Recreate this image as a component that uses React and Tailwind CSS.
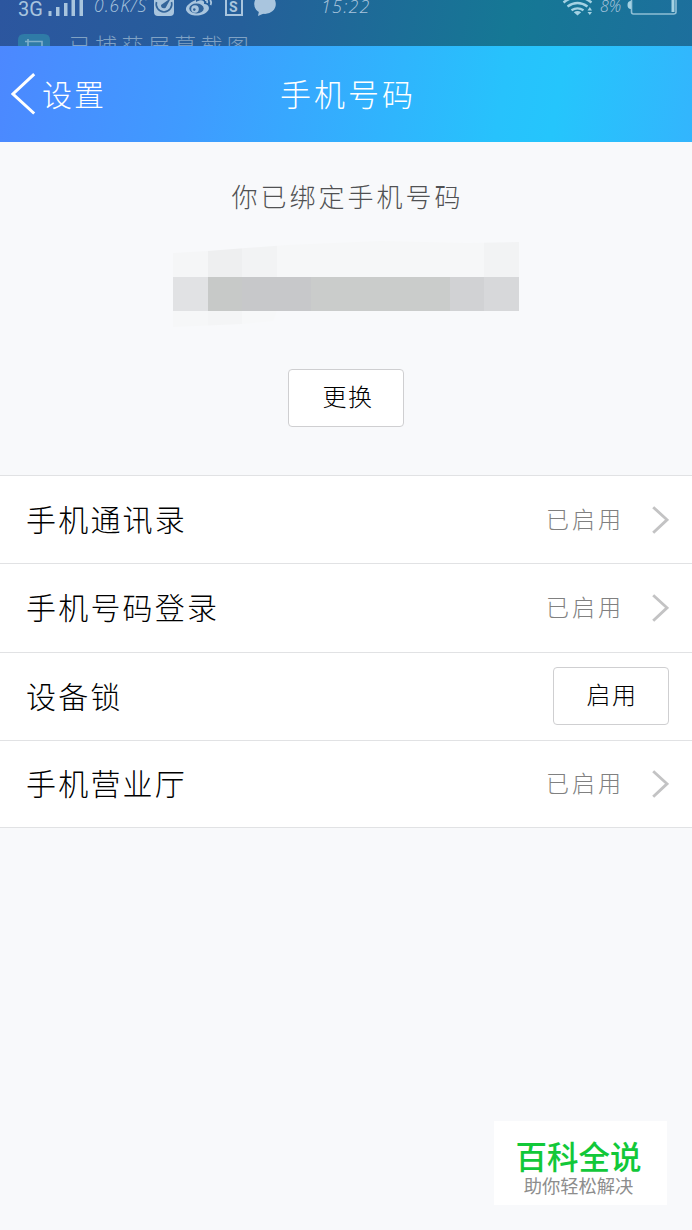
const CJK = "font-['Noto_Sans_CJK_SC',sans-serif]";

function Chevron() {
  return (
    <svg className="ml-[28px] h-[28px] w-[17px] shrink-0" viewBox="0 0 17 28" fill="none" stroke="#c3c3c4" strokeWidth="2.9">
      <path d="M1.2 1.2 L15 13.8 L1.2 26.8" />
    </svg>
  );
}

function Row({ label, action, height }) {
  return (
    <li className={"flex items-center border-b border-[#e1e2e4] bg-white pl-[26px] pr-[23px] " + height}>
      <span className="flex-1 pb-[4px] text-[30px] font-light leading-[40px] tracking-[2.2px] text-black">{label}</span>
      {action ? (
        <button className="mb-[2px] h-[58px] w-[116px] rounded-[4px] border border-[#cfcfd1] bg-white pb-[4px] pl-[2px] text-[24px] font-light leading-none tracking-[1.5px] text-black">
          {action}
        </button>
      ) : (
        <>
          <span className="pb-[3px] text-[23px] font-light tracking-[3px] text-[#808080]">已启用</span>
          <Chevron />
        </>
      )}
    </li>
  );
}

function StatusIcons() {
  return (
    <svg className="absolute left-0 top-0 h-[46px] w-[692px]" viewBox="0 0 692 46" fill="none">
      <g fill="#a9c5de">
        <rect x="48.5" y="11" width="3" height="5" />
        <rect x="56" y="7" width="3.5" height="9" />
        <rect x="64" y="3" width="3.5" height="13" />
        <rect x="71.5" y="0" width="3.5" height="16" />
        <rect x="79.5" y="0" width="3.5" height="16" />
        <path d="M154 0 H174 V12 Q174 16 170 16 H158 Q154 16 154 12Z" />
        <ellipse cx="265" cy="4" rx="10.8" ry="10" />
        <path d="M259 11 L258 16 L265 13Z" />
      </g>
      <path d="M156.5 2 A7.8 7.8 0 1 0 171.5 2" stroke="#34659a" strokeWidth="1.6" />
      <path d="M161 5 L171 -2 L165.5 8 Q161 9 161 5Z" fill="#34659a" />
      <path
        d="M196 0 C188 3 184.5 8 186.5 11 C190 17.5 204 17 208.5 10 C210 6 207 4 204 4 C205 0 201 -1 196 2"
        fill="#a9c5de"
      />
      <ellipse cx="196.5" cy="8.5" rx="7.2" ry="5" fill="#31639a" />
      <circle cx="195" cy="9" r="3.8" fill="#a9c5de" />
      <circle cx="194.3" cy="9.6" r="1.3" fill="#31639a" />
      <path d="M205 0 Q208 0 207 3 M210 0 Q212 2 210.5 5" stroke="#a9c5de" strokeWidth="1.8" />
      <path d="M226 0 V15 H242 V0" stroke="#a9c5de" strokeWidth="2" />
      <path d="M18 46 V40 Q18 34 24 34 H44 Q50 34 50 40 V46Z" fill="#2f7ba7" />
      <path d="M25 41.5 H42 V46 M28 39 V46" stroke="#7fb0cb" strokeWidth="1.6" />
      <g stroke="#a4d2e3" strokeWidth="2.4">
        <path d="M563.5 2.5 Q577.5 -8.5 591.5 2.5" />
        <path d="M567.5 6.5 Q577.5 -0.5 587.5 6.5" />
        <path d="M571.5 10.2 Q577.5 6.5 583.5 10.2" />
      </g>
      <path d="M573.8 12.2 Q577.5 9.8 581.2 12.2 L577.5 15.5Z" fill="#a4d2e3" />
      <path d="M587.5 10.5 L589.8 7 L592 10.5Z M587.5 12 L589.8 15 L592 12Z" fill="#a4d2e3" />
      <path d="M631.5 0 V12 Q631.5 14 633.5 14 H673.5 Q676 14 676 12 V0" stroke="#8fbfd5" strokeWidth="1.6" />
      <path d="M631 1 Q627.5 1 627.5 5 Q627.5 9 631 9Z M671.5 0 H674.5 V12 H671.5Z" fill="#a4d2e3" />
    </svg>
  );
}

function StatusBar() {
  return (
    <div className="relative h-[46px] overflow-hidden bg-[linear-gradient(100deg,#2c569f_0%,#255f9a_35%,#157895_74%,#1d6f9d_100%)]">
      <StatusIcons />
      <div className="relative -mt-[4px] flex h-[20px] items-center whitespace-nowrap leading-none text-[#a9c5de]">
        <span className="ml-[18px] w-[76px] pt-[5px] font-['Roboto',sans-serif] text-[20px]">3G</span>
        <span className="w-[131px] font-['Open_Sans',sans-serif] text-[17.5px] font-light italic tracking-[1px]">0.6K/S</span>
        <span className="w-[96px] pl-[4px] pt-px font-['Roboto',sans-serif] text-[14px] font-bold">S</span>
        <span className="w-[278px] font-['Open_Sans',sans-serif] text-[18px] font-light italic tracking-[1.2px]">15:22</span>
        <span className="pl-px font-['Open_Sans',sans-serif] text-[16px] font-light italic">8%</span>
      </div>
      <p className="relative ml-[69px] mt-[15px] whitespace-nowrap text-[22px] font-light leading-[26px] tracking-[4.3px] text-[#80a2c4]">
        已捕获屏幕截图
      </p>
    </div>
  );
}

// Each cell of the masked phone number, left to right.
const UPPER = ["bg-[#f5f6f7]", "bg-[#eeeff0]", "bg-[#f2f3f4]", "bg-[#f6f7f8]", "bg-[#f6f7f8]", "bg-[#f6f7f8]", "bg-[#f6f7f8]", "bg-[#f6f7f8]", "bg-[#f6f7f8]", "bg-[#f2f3f4]"];
const MIDDLE = ["bg-[#e1e2e4]", "bg-[#c7c9c8]", "bg-[#c7c8ca]", "bg-[#c7c8ca]", "bg-[#cacccb]", "bg-[#cacccb]", "bg-[#cacccb]", "bg-[#cacccb]", "bg-[#d1d2d4]", "bg-[#d7d8da]"];

function MaskedNumber() {
  return (
    <div className="mt-[26px] w-[346px]">
      <div className="grid h-[36px] grid-cols-10 [clip-path:polygon(0_12px,10%_10px,33%_4px,60%_0,85%_2px,100%_1px,100%_100%,0_100%)]">
        {UPPER.map((c, i) => <i key={i} className={c} />)}
      </div>
      <div className="grid h-[34px] grid-cols-10">
        {MIDDLE.map((c, i) => <i key={i} className={c} />)}
      </div>
      <div className="grid h-[16px] grid-cols-10 [clip-path:polygon(0_0,30%_0,29%_10px,20%_13px,0_16px)]">
        <i className="bg-[#f6f7f8]" />
        <i className="bg-[#f4f5f6]" />
        <i className="bg-[#f7f8f9]" />
      </div>
    </div>
  );
}

export default function App() {
  return (
    <div className={"flex h-[1230px] w-[692px] flex-col overflow-hidden bg-[#f8f9fb] " + CJK}>
      <StatusBar />
      <header className="grid h-24 shrink-0 grid-cols-[1fr_auto_1fr] items-center bg-[linear-gradient(100deg,#4c88ff_0%,#3f9bff_28%,#27c2fc_72%,#25c5fc_80%,#33b5fd_100%)] text-white">
        <div className="flex items-center pl-[11px]">
          <svg className="h-[42px] w-[25px]" viewBox="0 0 25 42" fill="none" stroke="currentColor" strokeWidth="3">
            <path d="M23.2 1.2 L2 21 L23.2 40.5" />
          </svg>
          <span className="ml-[6px] pb-[3px] text-[30px] font-light leading-none tracking-[2px]">设置</span>
        </div>
        <h1 className="pb-[4px] pl-[4px] text-[31px] font-light leading-none tracking-[3px]">手机号码</h1>
        <span />
      </header>
      <section className="flex h-[333px] shrink-0 flex-col items-center pt-[35px]">
        <p className="pl-[3px] text-[26px] font-light leading-[38px] tracking-[3px] text-[#505153]">你已绑定手机号码</p>
        <MaskedNumber />
        <button className="mt-[42px] h-[58px] w-[116px] rounded-[4px] border border-[#cfcfd1] bg-white pb-1 pl-[4px] text-[24px] font-light leading-none tracking-[1.5px] text-black">
          更换
        </button>
      </section>
      <ul className="shrink-0 border-t border-[#e1e2e4]">
        <Row label="手机通讯录" height="h-[88px]" />
        <Row label="手机号码登录" height="h-[89px]" />
        <Row label="设备锁" action="启用" height="h-[88px]" />
        <Row label="手机营业厅" height="h-[87px]" />
      </ul>
      <aside className="mb-[25px] mr-[25px] mt-auto flex h-[84px] w-[173px] flex-col items-center self-end bg-white pr-[4px] pt-[17px]">
        <strong className="text-[31.5px] font-medium leading-[34px] text-[#12c839]">百科全说</strong>
        <span className="mt-[1px] text-[18.3px] leading-[24px] text-[#8d8d8d]">助你轻松解决</span>
      </aside>
    </div>
  );
}
